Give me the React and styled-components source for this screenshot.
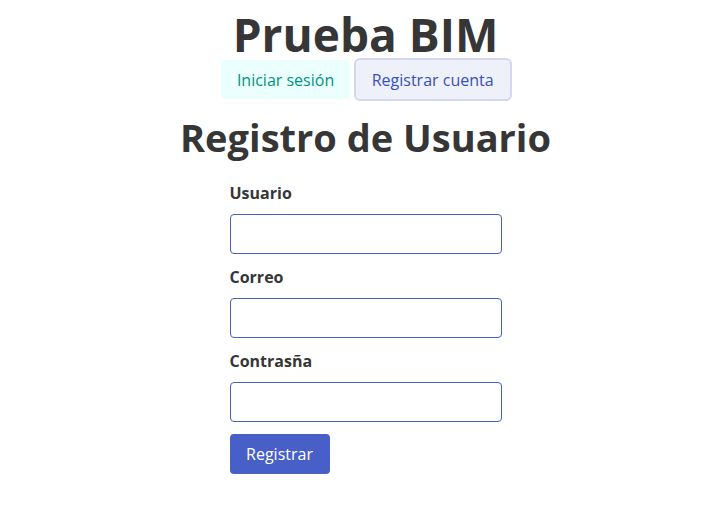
import React from "react";
import styled, { createGlobalStyle } from "styled-components";

const Global = createGlobalStyle`
  html, body { margin: 0; padding: 0; background: #fff; }
  body { font-family: "Open Sans", "Noto Sans", sans-serif; color: #363636; }
  * { box-sizing: border-box; }
`;

const Page = styled.div`
  width: 719px;
  padding-left: 12px;
  display: flex;
  flex-direction: column;
  align-items: center;
`;

const Title = styled.h1`
  margin: 0;
  height: 60px;
  font-size: 46px;
  font-weight: 700;
  line-height: 68px;
  color: #363636;
`;

const Nav = styled.div`
  display: flex;
  gap: 6px;
  align-items: center;
`;

const NavButton = styled.button`
  font-family: inherit;
  font-size: 16px;
  height: 39px;
  padding: 0 ${(p) => (p.$variant === "link" ? "15px" : "14.5px")};
  border-radius: 4px;
  cursor: pointer;
  border: 1px solid transparent;
  background: ${(p) => (p.$variant === "link" ? "#eef0fa" : "#ebfffc")};
  color: ${(p) => (p.$variant === "link" ? "#3850b7" : "#00947e")};
  box-shadow: ${(p) => (p.$active ? "0 0 0 2px #d3d7f0" : "none")};
`;

const Subtitle = styled.h2`
  margin: 15px 0 0;
  font-size: 38px;
  font-weight: 700;
  line-height: 46px;
  color: #363636;
`;

const Form = styled.form`
  width: 272px;
  margin-top: 22px;
  display: flex;
  flex-direction: column;
`;

const Field = styled.div`
  display: flex;
  flex-direction: column;
  margin-bottom: 12px;
`;

const Label = styled.label`
  font-size: 16px;
  font-weight: 700;
  line-height: 23px;
  margin-bottom: 9px;
  color: #363636;
`;

const Input = styled.input`
  height: 40px;
  width: 100%;
  border: 1px solid #485fc7;
  border-radius: 4px;
  font-family: inherit;
  font-size: 16px;
  padding: 0 10px;
  outline: none;
`;

const Submit = styled.button`
  align-self: flex-start;
  height: 40px;
  width: 100px;
  padding: 0;
  border: none;
  border-radius: 4px;
  background: #485fc7;
  color: #fff;
  font-family: inherit;
  font-size: 16px;
`;

export default function App() {
  return (
    <>
      <Global />
      <Page>
        <Title>Prueba BIM</Title>
        <Nav>
          <NavButton>Iniciar sesión</NavButton>
          <NavButton $variant="link" $active>Registrar cuenta</NavButton>
        </Nav>
        <Subtitle>Registro de Usuario</Subtitle>
        <Form onSubmit={(e) => e.preventDefault()}>
          <Field>
            <Label>Usuario</Label>
            <Input type="text" />
          </Field>
          <Field>
            <Label>Correo</Label>
            <Input type="email" />
          </Field>
          <Field>
            <Label>Contrasña</Label>
            <Input type="password" />
          </Field>
          <Submit type="submit">Registrar</Submit>
        </Form>
      </Page>
    </>
  );
}
